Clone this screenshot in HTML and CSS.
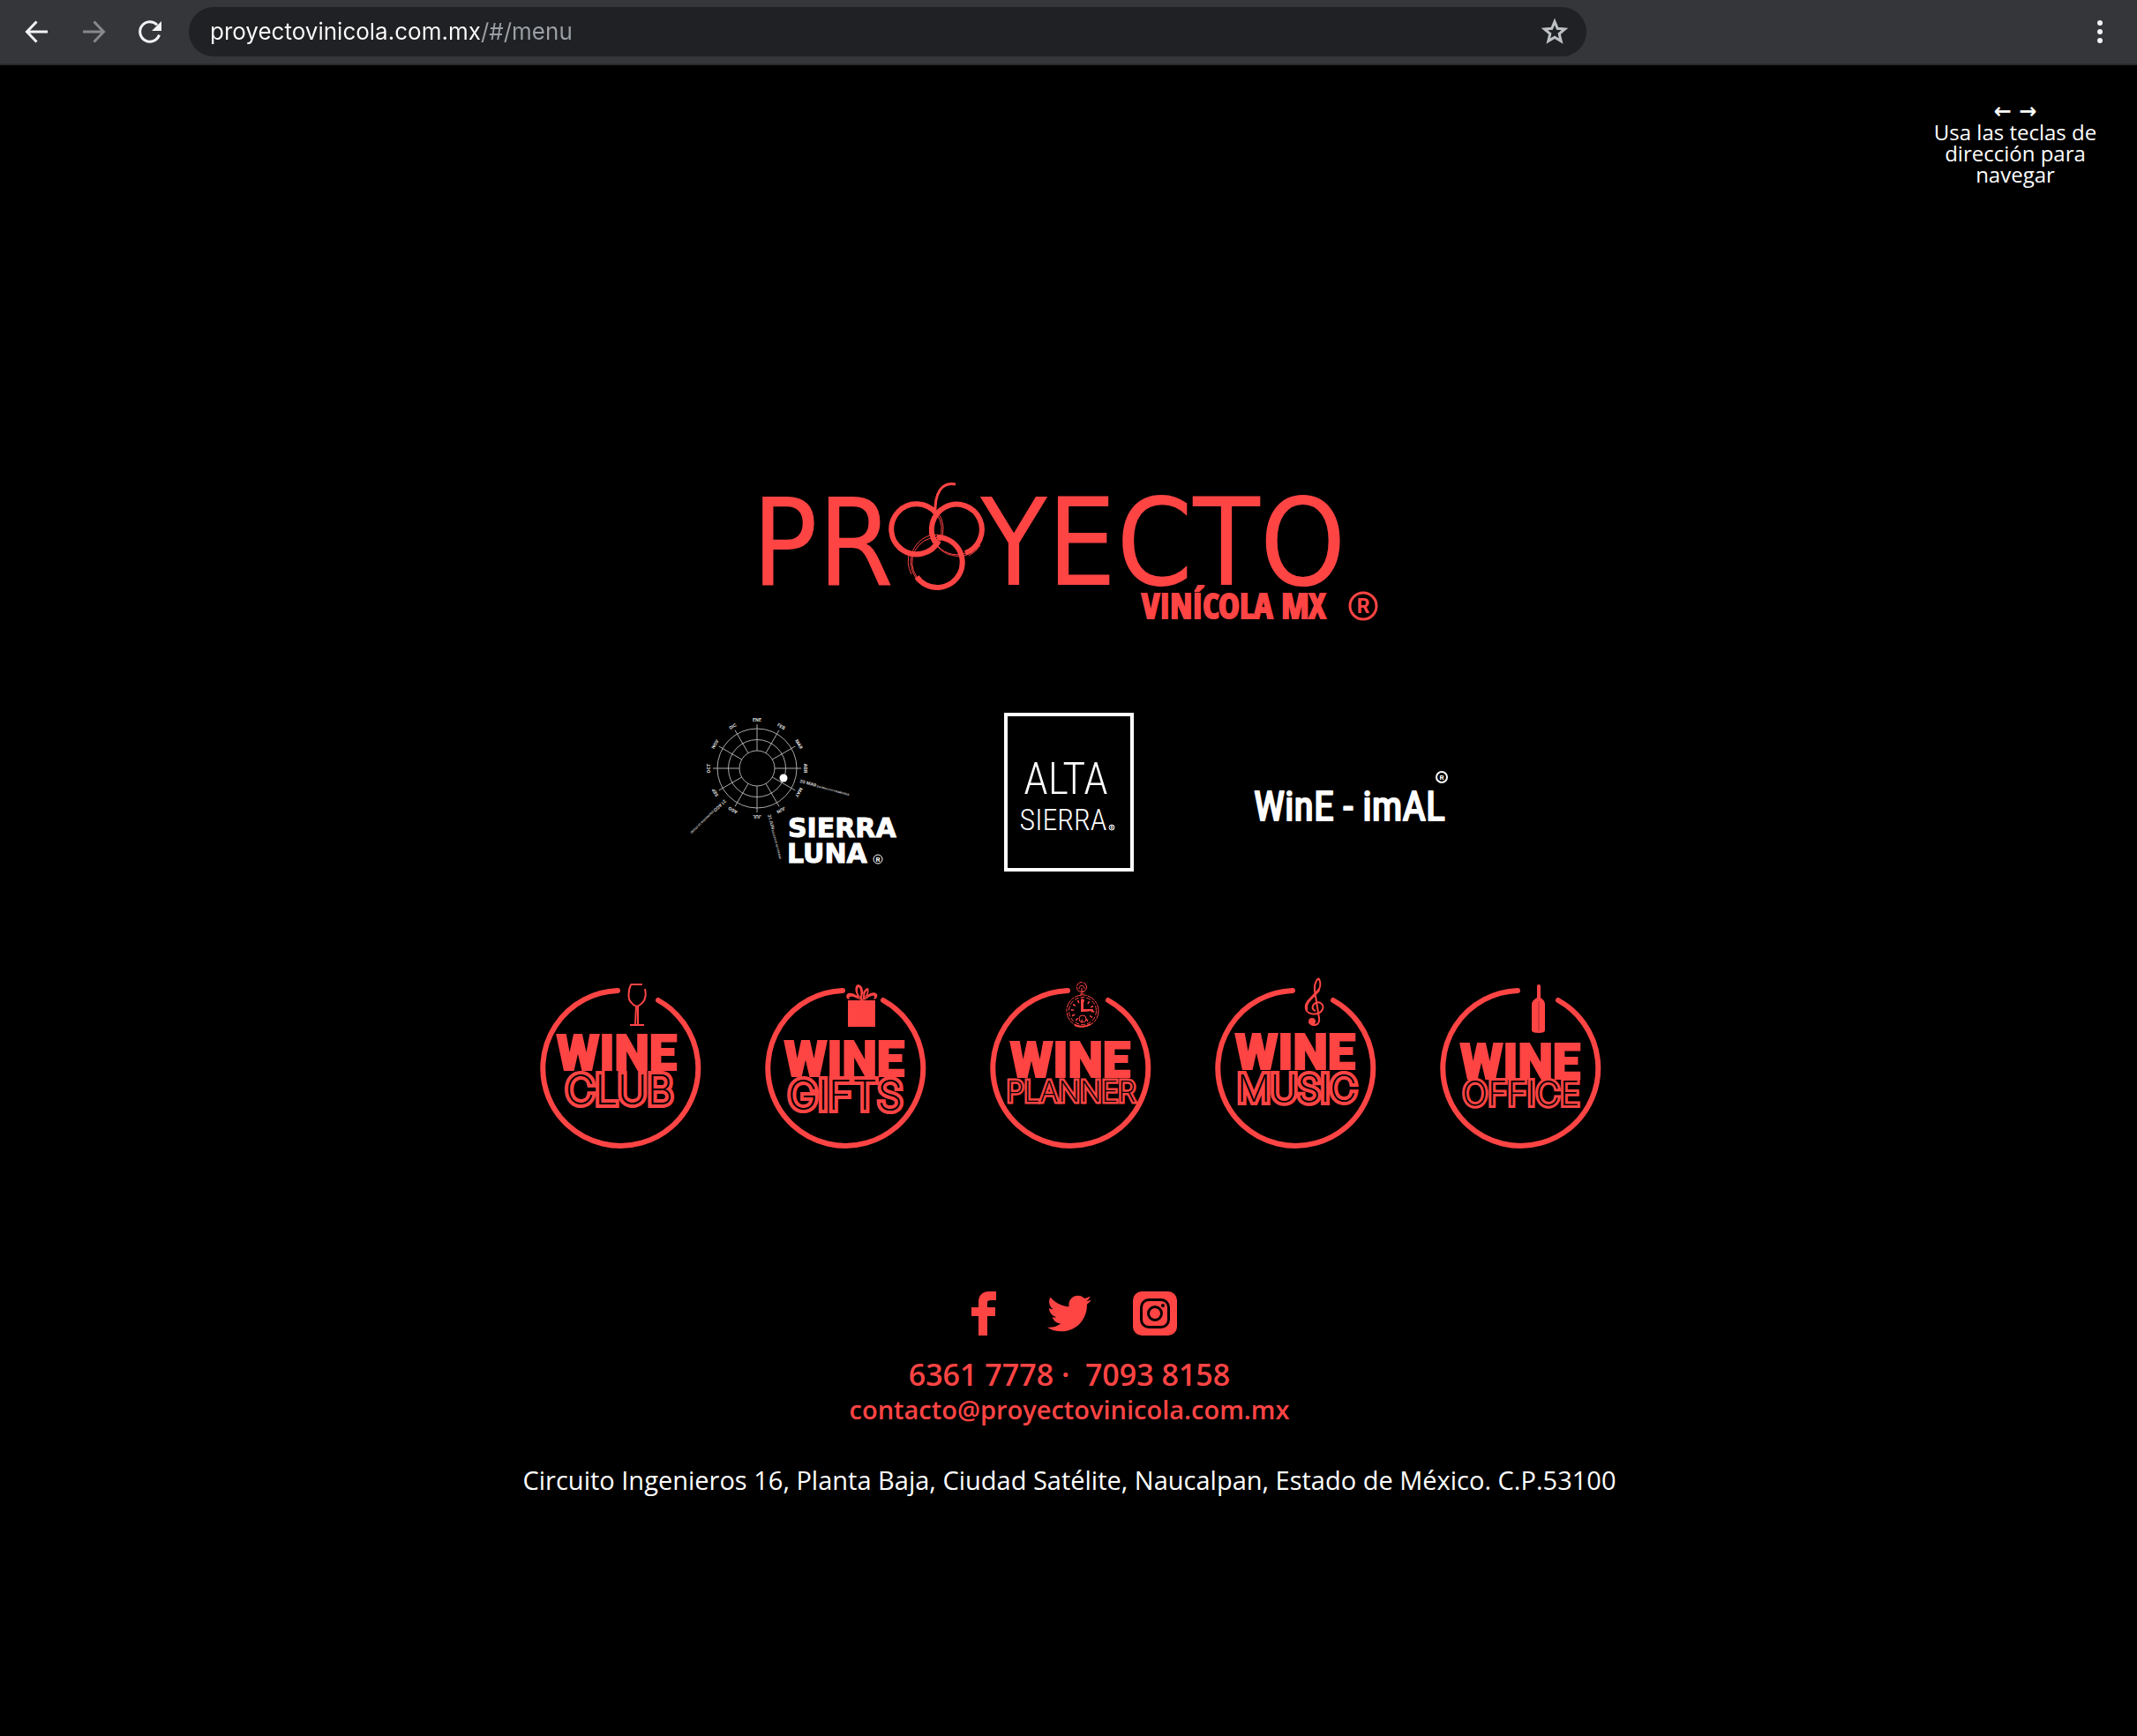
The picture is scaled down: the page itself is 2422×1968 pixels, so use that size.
FILE: index.html
```html
<!DOCTYPE html>
<html lang="es">
<head>
<meta charset="utf-8">
<title>Proyecto Vinícola MX</title>
<link rel="stylesheet" href="styles.css">
</head>
<body>
<header class="toolbar">
  <button class="tool" aria-label="Atrás"><svg width="32" height="32" viewBox="0 0 32 32"><path class="line" d="M28 16H5M15.500 4.500L4.500 16L15.500 27.500"/></svg></button>
  <button class="tool tool-off" aria-label="Adelante"><svg width="32" height="32" viewBox="0 0 32 32"><path class="line" d="M4 16H27M16.500 4.500L27.500 16L16.500 27.500"/></svg></button>
  <button class="tool" aria-label="Recargar"><svg width="32" height="32" viewBox="0 0 32 32"><path class="line" d="M26.500 19.500A11.200 11.200 0 1 1 24 8.200"/><path class="solid" d="M29 4V15H18Z"/></svg></button>
  <div class="address-bar">
    <input class="url" type="text" aria-label="Dirección" value="proyectovinicola.com.mx/#/menu">
    <button class="star" aria-label="Favorito"><svg width="32" height="32" viewBox="0 0 32 32"><path d="M16 4.500L19.200 12.300L27.600 12.900L21.200 18.400L23.200 26.600L16 22.200L8.800 26.600L10.800 18.400L4.400 12.900L12.800 12.300Z"/></svg></button>
  </div>
  <button class="tool tool-menu" aria-label="Menú"><svg width="32" height="32" viewBox="0 0 32 32"><circle class="solid" cx="16" cy="6" r="3"/><circle class="solid" cx="16" cy="16" r="3"/><circle class="solid" cx="16" cy="26" r="3"/></svg></button>
</header>

<main class="page">
  <p class="hint"><span class="arrows">← →</span>Usa las teclas de dirección para navegar</p>

  <h1 class="brand">
    <svg width="714" height="165" viewBox="0 0 714 165" role="img" aria-label="Proyecto Vinícola MX">
      <text class="word" x="-3" y="118">PR</text>
      <g class="grapes">
        <path d="M206 37A28.500 28.500 0 1 0 209 68"/>
        <path d="M205 70A28.500 28.500 0 1 1 239 82"/>
        <path d="M207 64A28.500 28.500 0 1 1 184 109"/>
      </g>
      <g class="fine">
        <path d="M206 37A28.500 28.500 0 0 1 209 68M208 36A31 31 0 0 1 211 68"/>
        <path d="M239 82A28.500 28.500 0 0 1 205 70M243 83A31 31 0 0 1 207 74M243 85A33 33 0 0 0 256 73"/>
        <path d="M184 109A28.500 28.500 0 0 1 207 64M189 116A31 31 0 0 1 203 61M178 106A31 31 0 0 1 177 79"/>
        <circle cx="207" cy="65" r="4"/><circle cx="207" cy="65" r="1.500"/>
      </g>
      <path class="stem" d="M228 4C212 1 204 14 205 38"/>
      <text class="word" x="256" y="118">YECTO</text>
      <text class="subword" x="439" y="156">VINÍCOLA MX</text>
      <circle class="reg-ring" cx="690" cy="142" r="15"/>
      <text class="reg" x="690" y="150">R</text>
    </svg>
  </h1>

  <nav class="labels" aria-label="Marcas">
    <a href="#sierra-luna" aria-label="Sierra Luna">
      <svg width="242" height="180" viewBox="0 0 242 180">
        <g class="wheel">
          <circle cx="82" cy="63" r="20"/><circle cx="82" cy="63" r="32.500"/><circle cx="82" cy="63" r="45"/>
          <path d="M82 43V13M82 83V113M62 63H32M102 63H132M92 45.700L107 19.700M99.300 53L125.300 38M99.300 73L125.300 88M92 80.300L107 106.300M72 80.300L57 106.300M64.700 73L38.700 88M64.700 53L38.700 38M72 45.700L57 19.700"/>
        </g>
        <circle class="moon" cx="112" cy="74" r="4.500"/>
        <g class="months" transform="translate(82 63)">
          <text y="-53">ENE</text><text y="-53" transform="rotate(30)">FEB</text><text y="-53" transform="rotate(60)">MAR</text><text y="-53" transform="rotate(90)">ABR</text><text y="-53" transform="rotate(120)">MAY</text><text y="-53" transform="rotate(150)">JUN</text><text y="-53" transform="rotate(180)">JUL</text><text y="-53" transform="rotate(210)">AGO</text><text y="-53" transform="rotate(240)">SEP</text><text y="-53" transform="rotate(270)">OCT</text><text y="-53" transform="rotate(300)">NOV</text><text y="-53" transform="rotate(330)">DIC</text>
        </g>
        <g class="dates">
          <text transform="translate(130 79) rotate(15)"><tspan class="day">20 MAR</tspan> EQUINOCCIO PRIMAVERA</text>
          <text transform="translate(94 116) rotate(75)"><tspan class="day">21 JUN</tspan> SOLSTICIO DE VERANO</text>
          <text transform="translate(45 98) rotate(136)"><tspan class="day">21 AGO</tspan> EQUINOCCIO DE OTOÑO</text>
        </g>
        <text class="sierra" x="117" y="141">SIERRA</text>
        <text class="sierra" x="116" y="170">LUNA</text>
        <circle class="tiny-ring" cx="219" cy="166" r="5"/><text class="tiny-reg" x="219" y="169">R</text>
      </svg>
    </a>
    <a href="#alta-sierra" aria-label="Alta Sierra">
      <svg width="147" height="180" viewBox="0 0 147 180">
        <rect class="frame" x="2" y="2" width="143" height="176"/>
        <text class="alta" x="70" y="92">ALTA</text>
        <text class="alta alta-small" x="67" y="133">SIERRA</text>
        <circle class="tiny-ring" cx="122" cy="130" r="3"/><text class="micro-reg" x="122" y="132">R</text>
      </svg>
    </a>
    <a href="#wine-imal" aria-label="Wine-imal">
      <svg width="244" height="180" viewBox="0 0 244 180">
        <text class="imal" x="16" y="122">WinE - imAL</text>
        <circle class="imal-ring" cx="229" cy="73" r="6"/><text class="tiny-reg" x="229" y="76">R</text>
      </svg>
    </a>
  </nav>

  <nav class="badges" aria-label="Servicios">
    <a href="#club" aria-label="Wine Club">
      <svg width="184" height="210" viewBox="0 0 184 210">
        <path class="ring" d="M136 29A88 88 0 1 1 90 18"/>
        <path class="glass" d="M105 11H118M105 11C102 18 101 28 106 32C108 35 110 35 112 36C121 32 123 25 121 16M111 36L110 56M113 36L113 56M104 57H120"/>
        <text class="wine" x="89" y="108">WINE</text>
        <text class="inline-xl" x="92" y="147">CLUB</text>
      </svg>
    </a>
    <a href="#gifts" aria-label="Wine Gifts">
      <svg width="184" height="210" viewBox="0 0 184 210">
        <path class="ring" d="M136 29A88 88 0 1 1 90 18"/>
        <path class="solid-red" d="M96 29H127V59H96Z"/>
        <path class="solid-red" fill-rule="evenodd" d="M111 29C107 22 98 19 95 22C93 25 95 28 98 28C96 25 99 24 102 25C106 26 108 28 111 29ZM111 29C103 22 103 13 107 11C113 11 115 20 112 29ZM110 25C111 20 110 15 108 14C106 17 107 22 110 25ZM112 29C112 21 115 15 119 15C121 19 118 26 113 29ZM115 25C117 22 118 20 118 18C116 19 115 22 115 25ZM114 29C118 21 125 18 129 22C130 25 128 28 125 28C127 25 126 23 123 24C119 25 117 28 114 29Z"/>
        <text class="wine" x="92" y="115">WINE</text>
        <text class="inline-xl" x="93" y="153">GIFTS</text>
      </svg>
    </a>
    <a href="#planner" aria-label="Wine Planner">
      <svg width="184" height="210" viewBox="0 0 184 210">
        <path class="ring" d="M136 29A88 88 0 1 1 90 18"/>
        <g class="sketch">
          <circle cx="107" cy="41" r="18" stroke-dasharray="9 1 4 1"/><circle cx="107" cy="41" r="15.500" stroke-dasharray="5 2"/>
          <circle cx="107" cy="41" r="11.500" stroke-width="3.500" stroke-dasharray="1.500 4.520"/>
          <circle cx="106" cy="14" r="5.500" stroke-dasharray="8 1"/><path d="M103 16C103 11 109 11 109 16M105 19H109M104 22H109M106 15V22"/>
          <circle cx="107" cy="50" r="4"/><path d="M98 57Q107 61 116 56" stroke-width="2"/>
        </g>
        <path class="solid-red" d="M105 42V29L106 26L108 29V39H119V41L108 42Z"/>
        <text class="wine" x="93" y="116">WINE</text>
        <text class="inline-s" x="94" y="144">PLANNER</text>
      </svg>
    </a>
    <a href="#music" aria-label="Wine Music">
      <svg width="184" height="210" viewBox="0 0 184 210">
        <path class="ring" d="M136 29A88 88 0 1 1 90 18"/>
        <path class="clef" d="M111 56C117 59 121 55 120 49L115 18C114 9 119 3 120 5C124 13 119 19 113 25C105 32 103 36 106 41C110 46 121 46 124 39C126 33 120 30 116 32C111 35 112 40 116 41"/>
        <path class="clef-thick" d="M120 17L108 30C105 34 105 37 106 40"/>
        <circle class="solid-red" cx="112" cy="53" r="4"/>
        <text class="wine" x="93" y="107">WINE</text>
        <text class="inline-l" x="95" y="144">MUSIC</text>
      </svg>
    </a>
    <a href="#office" aria-label="Wine Office">
      <svg width="184" height="210" viewBox="0 0 184 210">
        <path class="ring" d="M136 29A88 88 0 1 1 90 18"/>
        <path class="solid-red" d="M112 13Q112 11 114 11Q116 11 116 13V26Q121 29 121 34V63Q121 66 114 66Q106 66 106 63V34Q106 29 112 26Z"/>
        <path class="seam" d="M114 30V64"/>
        <text class="wine" x="93" y="118">WINE</text>
        <text class="inline-m" x="94" y="148">OFFICE</text>
      </svg>
    </a>
  </nav>

  <footer class="contact">
    <div class="social">
      <a href="#facebook" aria-label="Facebook"><svg width="50" height="50" viewBox="0 0 50 50"><path class="solid-red" d="M19 50V28H11V18H19V12C19 4 24 0 31 0H39V10H33C30 10 29 11 29 13V18H38V28H29V50Z"/></svg></a>
      <a href="#twitter" aria-label="Twitter"><svg width="50" height="50" viewBox="0 0 512 512"><path class="solid-red" d="M459.370 151.716c.325 4.548.325 9.097.325 13.645 0 138.720-105.583 298.558-298.558 298.558-59.452 0-114.680-17.219-161.137-47.106 8.447.974 16.568 1.299 25.340 1.299 49.055 0 94.213-16.568 130.274-44.832-46.132-.975-84.792-31.188-98.112-72.772 6.498.974 12.995 1.624 19.818 1.624 9.421 0 18.843-1.300 27.614-3.573-48.081-9.747-84.143-51.980-84.143-102.985v-1.299c13.969 7.797 30.214 12.670 47.431 13.319-28.264-18.843-46.781-51.005-46.781-87.391 0-19.492 5.197-37.360 14.294-52.954 51.655 63.675 129.300 105.258 216.365 109.807-1.624-7.797-2.599-15.918-2.599-24.040 0-57.828 46.782-104.934 104.934-104.934 30.213 0 57.502 12.670 76.670 33.137 23.715-4.548 46.456-13.320 66.599-25.340-7.798 24.366-24.366 44.833-46.132 57.827 21.117-2.273 41.584-8.122 60.426-16.243-14.292 20.791-32.161 39.308-52.628 54.253z"/></svg></a>
      <a href="#instagram" aria-label="Instagram"><svg width="50" height="50" viewBox="0 0 50 50"><rect class="solid-red" width="50" height="50" rx="10"/><g class="camera"><rect x="9.500" y="9.500" width="31" height="31" rx="8.500"/><circle cx="25" cy="25" r="7.500"/></g><circle cx="34" cy="16" r="2"/></svg></a>
    </div>
    <p class="phones"><a href="tel:63617778">6361 7778</a> ·&nbsp; <a href="tel:70938158">7093 8158</a></p>
    <p class="email"><a href="mailto:contacto@proyectovinicola.com.mx">contacto@proyectovinicola.com.mx</a></p>
    <address class="street">Circuito Ingenieros 16, Planta Baja, Ciudad Satélite, Naucalpan, Estado de México. C.P.53100</address>
  </footer>
</main>
</body>
</html>
```
FILE: styles.css
```css
:root {
  --red: #ff4444;
}

* {
  box-sizing: border-box;
}

body {
  margin: 0;
  min-height: 100vh;
  background: #000;
  color: #fff;
  font-family: "Open Sans", "Noto Sans", sans-serif;
}

p, h1 {
  margin: 0;
}

a {
  color: inherit;
  text-decoration: none;
}

svg {
  display: block;
  overflow: visible;
}

button {
  border: 0;
  padding: 0;
  background: none;
}

/* Browser bar */
.toolbar {
  display: flex;
  align-items: center;
  gap: 16px;
  height: 74px;
  padding: 0 18px;
  background: #35363a;
  border-bottom: 2px solid #28292c;
}

.tool {
  display: flex;
  flex: none;
  justify-content: center;
  width: 48px;
  color: #f1f3f4;
}

.tool-off {
  color: #87888b;
}

.tool-menu {
  margin-left: auto;
}

.line {
  fill: none;
  stroke: currentColor;
  stroke-width: 3;
}

.solid {
  fill: currentColor;
}

.address-bar {
  display: flex;
  align-items: center;
  flex: 0 1 1584px;
  height: 56px;
  margin-left: 4px;
  padding: 0 20px 0 24px;
  border-radius: 28px;
  background: #202124;
}

.url {
  flex: 1;
  min-width: 0;
  padding: 0;
  border: 0;
  outline: 0;
  background: linear-gradient(90deg, #fff 308px, #9aa0a6 308px);
  background-clip: text;
  -webkit-background-clip: text;
  color: transparent;
  font: 26px/40px Inter, Roboto, sans-serif;
}

.star path {
  fill: none;
  stroke: #bdc1c6;
  stroke-width: 3;
}

/* Page */
.page {
  display: flex;
  flex-direction: column;
  align-items: center;
  padding: 40px 42px 80px 44px;
}

.hint {
  align-self: flex-end;
  width: 192px;
  font-size: 24px;
  line-height: 24px;
  text-align: center;
}

.arrows {
  display: block;
  font-family: "DejaVu Sans", sans-serif;
  font-weight: 700;
}

.brand {
  margin-top: 335px;
}

.word {
  fill: var(--red);
  font: 400 138px "DejaVu Sans Condensed", "DejaVu Sans", sans-serif;
}

.subword {
  fill: var(--red);
  stroke: var(--red);
  stroke-width: 2px;
  font: 700 40px "Open Sans Condensed", "Roboto Condensed", sans-serif;
}

.grapes {
  fill: none;
  stroke: var(--red);
  stroke-width: 6px;
}

.fine {
  fill: none;
  stroke: var(--red);
  stroke-width: 1px;
}

.stem {
  fill: none;
  stroke: var(--red);
  stroke-width: 3px;
}

.reg-ring {
  fill: none;
  stroke: var(--red);
  stroke-width: 3px;
}

.reg {
  fill: var(--red);
  font: 700 23px Roboto, sans-serif;
  text-anchor: middle;
}

.labels {
  display: flex;
  flex-wrap: wrap;
  justify-content: center;
  gap: 120px;
  margin-top: 98px;
}

.wheel {
  fill: none;
  stroke: #aaa;
  stroke-width: 1px;
}

.moon {
  fill: #fff;
}

.months {
  fill: #ddd;
  font: 700 5px Inter, sans-serif;
  text-anchor: middle;
}

.dates {
  fill: #ccc;
  font: 700 3px Inter, sans-serif;
}

.day {
  font-size: 5px;
}

.sierra {
  fill: #fff;
  stroke: #fff;
  stroke-width: 1px;
  font: 700 30px "DejaVu Sans", sans-serif;
}

.tiny-ring {
  fill: none;
  stroke: #fff;
  stroke-width: 1px;
}

.tiny-reg,
.micro-reg {
  fill: #fff;
  font: 700 8px Roboto, sans-serif;
  text-anchor: middle;
}

.micro-reg {
  font-size: 5px;
}

.frame {
  fill: none;
  stroke: #fff;
  stroke-width: 4px;
}

.alta {
  fill: #fff;
  font: 300 50px "Roboto Condensed Light", "Roboto Condensed", sans-serif;
  text-anchor: middle;
}

.alta-small {
  font-size: 34px;
}

.imal {
  fill: #fff;
  stroke: #fff;
  stroke-width: 2px;
  stroke-linejoin: round;
  font: 400 46px "Roboto Condensed", sans-serif;
}

.imal-ring {
  fill: none;
  stroke: #fff;
  stroke-width: 2px;
}

.badges {
  display: flex;
  flex-wrap: wrap;
  justify-content: center;
  gap: 71px;
  margin-top: 117px;
}

.ring {
  fill: none;
  stroke: var(--red);
  stroke-width: 6px;
  stroke-linecap: round;
}

.sketch {
  fill: none;
  stroke: var(--red);
  stroke-width: 1px;
}

.solid-red {
  fill: var(--red);
}

.glass,
.clef,
.clef-thick {
  fill: none;
  stroke: var(--red);
  stroke-width: 2px;
}

.clef-thick {
  stroke-width: 3px;
}

.seam {
  stroke: #b02e2e;
  stroke-width: 1px;
}

.wine {
  fill: var(--red);
  stroke: var(--red);
  stroke-width: 2px;
  font: 900 56px Roboto, sans-serif;
  text-anchor: middle;
}

/* Inline lettering: a thin line drawn inside a wide red stroke */
.inline-xl,
.inline-l,
.inline-m,
.inline-s {
  fill: #000;
  stroke: var(--red);
  stroke-width: 8px;
  stroke-miterlimit: 2;
  paint-order: stroke;
  font: 200 46px Inter, sans-serif;
  text-anchor: middle;
}

.inline-l {
  font-size: 42px;
}

.inline-m {
  stroke-width: 6px;
  font-size: 38px;
}

.inline-s {
  stroke-width: 5px;
  font-size: 32px;
}

.contact {
  display: flex;
  flex-direction: column;
  align-items: center;
  margin-top: 149px;
  line-height: 40px;
  text-align: center;
}

.social {
  display: flex;
  gap: 47px;
  margin-bottom: 24px;
}

.camera {
  fill: none;
  stroke: #000;
  stroke-width: 3px;
}

.phones,
.email {
  color: var(--red);
  font-size: 34px;
  font-weight: 600;
}

.email {
  font-size: 29px;
}

.street {
  margin-top: 40px;
  font-size: 29px;
  font-style: normal;
}
```
